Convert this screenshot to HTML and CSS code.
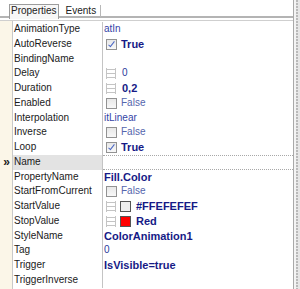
FILE: index.html
```html
<!DOCTYPE html>
<html lang="en">

<head>
    <meta charset="UTF-8">
    <title>Inspector</title>
    <link rel="stylesheet" href="styles.css">
</head>

<body>
    <div class="window">
        <div class="main">
            <div class="tabs">
                <div class="tab active">Properties</div>
                <div class="tab">Events</div>
            </div>
            <div class="rule"></div>
            <div class="list">
                <div class="row"><span class="mark"></span><span class="key">AnimationType</span><span class="val enum">atIn</span></div>
                <div class="row"><span class="mark"></span><span class="key">AutoReverse</span><span class="val"><i class="check on"></i><b>True</b></span></div>
                <div class="row"><span class="mark"></span><span class="key">BindingName</span><span class="val"></span></div>
                <div class="row"><span class="mark"></span><span class="key">Delay</span><span class="val"><i class="grip"></i><span class="num">0</span></span></div>
                <div class="row"><span class="mark"></span><span class="key">Duration</span><span class="val"><i class="grip"></i><b>0,2</b></span></div>
                <div class="row"><span class="mark"></span><span class="key">Enabled</span><span class="val"><i class="check"></i><span class="off">False</span></span></div>
                <div class="row"><span class="mark"></span><span class="key">Interpolation</span><span class="val enum">itLinear</span></div>
                <div class="row"><span class="mark"></span><span class="key">Inverse</span><span class="val"><i class="check"></i><span class="off">False</span></span></div>
                <div class="row"><span class="mark"></span><span class="key">Loop</span><span class="val"><i class="check on"></i><b>True</b></span></div>
                <div class="row current"><span class="mark">&raquo;</span><span class="key">Name</span><span class="val"></span></div>
                <div class="row"><span class="mark"></span><span class="key">PropertyName</span><span class="val"><b>Fill.Color</b></span></div>
                <div class="row"><span class="mark"></span><span class="key">StartFromCurrent</span><span class="val"><i class="check"></i><span class="off">False</span></span></div>
                <div class="row"><span class="mark"></span><span class="key">StartValue</span><span class="val"><i class="grip"></i><i class="swatch white"></i><b>#FFEFEFEF</b></span></div>
                <div class="row"><span class="mark"></span><span class="key">StopValue</span><span class="val"><i class="grip"></i><i class="swatch red"></i><b>Red</b></span></div>
                <div class="row"><span class="mark"></span><span class="key">StyleName</span><span class="val"><b>ColorAnimation1</b></span></div>
                <div class="row"><span class="mark"></span><span class="key">Tag</span><span class="val num">0</span></div>
                <div class="row"><span class="mark"></span><span class="key">Trigger</span><span class="val"><b>IsVisible=true</b></span></div>
                <div class="row"><span class="mark"></span><span class="key">TriggerInverse</span><span class="val"></span></div>
            </div>
        </div>
        <div class="splitter"></div>
    </div>
</body>

</html>
```

FILE: styles.css
```css
body {
    margin: 0;
    background: #fff;
    font-family: "Liberation Sans", Arial, sans-serif;
    font-size: 10px;
    color: #1a1a1a;
}

.window {
    display: flex;
    height: 289px;
    width: 300px;
    overflow: hidden;
}

.main {
    width: 293px;
    display: flex;
    flex-direction: column;
}

/* tab strip */
.tabs {
    display: flex;
    height: 12px;
    padding: 4px 0 0 9px;
    border-bottom: 2px solid #b4b4b4;
}

.tab {
    height: 12px;
    line-height: 12px;
    padding: 0 4px 0 3px;
    margin-top: 1px;
    color: #222;
    border-right: 1px solid #b8b8b8;
}

.tab.active {
    margin-top: 0;
    height: 14px;
    padding: 0 1px 0 1px;
    background: #f7f7f7;
    border: 1px solid #9c9c9c;
    border-bottom: none;
    margin-right: 4px;
    position: relative;
    z-index: 1;
}

.rule {
    margin-top: 2px;
    border-top: 1px solid #cfcfcf;
}

/* property grid */
.list {
    flex: 1;
    padding-top: 1px;
    background: linear-gradient(to right, #fbf6e8 12px, #c9c9c9 12px, #c9c9c9 13px, #fff 13px);
}

.row {
    display: flex;
    height: 14.75px;
    line-height: 14.75px;
}

.mark {
    width: 13px;
    flex: none;
    font-weight: bold;
    font-size: 12px;
    text-align: center;
    color: #222;
}

.key {
    width: 88px;
    flex: none;
    padding-left: 1px;
    border-right: 1px solid #c4c4c4;
    white-space: nowrap;
    overflow: hidden;
}

.current .key {
    background: #e3e3e3;
}

.current .val {
    border-top: 1px dotted #a8a8a8;
    border-bottom: 1px dotted #a8a8a8;
    box-sizing: border-box;
}

.val {
    flex: 1;
    display: flex;
    align-items: center;
    padding-left: 1px;
    white-space: nowrap;
    color: #1d2590;
}

.val b {
    font-weight: bold;
    font-size: 11px;
    color: #161a86;
}

.enum {
    color: #3444a6;
}

.num {
    color: #2a3a9c;
}

.off {
    color: #5565ad;
}

/* editors */
.check {
    width: 9px;
    height: 9px;
    margin: 0 4px 0 2px;
    border: 1px solid #929292;
    background: linear-gradient(#e8e8e8, #f8f8f8);
    position: relative;
}

.check.on::after {
    content: "";
    position: absolute;
    left: 3px;
    top: 0;
    width: 2px;
    height: 6px;
    border: solid #4b68c4;
    border-width: 0 1.5px 1.5px 0;
    transform: rotate(38deg);
}

.grip {
    width: 8px;
    height: 11px;
    margin: 0 6px 0 2px;
    border-left: 1px solid #c4c4c4;
    border-right: 1px solid #c4c4c4;
    background: linear-gradient(#c4c4c4, #c4c4c4) 0 1px / 100% 1px no-repeat,
        linear-gradient(#c4c4c4, #c4c4c4) 0 5px / 100% 1px no-repeat,
        linear-gradient(#c4c4c4, #c4c4c4) 0 9px / 100% 1px no-repeat;
}

.val .grip + .swatch {
    margin-left: -2px;
}

.swatch {
    width: 9px;
    height: 9px;
    margin-right: 5px;
    border: 1px solid #555;
}

.swatch.white {
    background: #efefef;
}

.swatch.red {
    background: #f00;
}

.splitter {
    flex: 1;
    border-left: 1px solid #a9a9a9;
    background: linear-gradient(to right, #f4f4f4 2px, transparent 2px, transparent 4px, #e6e6e6 4px),
        repeating-linear-gradient(#b9b9b9 0 2px, #e8e8e8 2px 3px);
}
```
